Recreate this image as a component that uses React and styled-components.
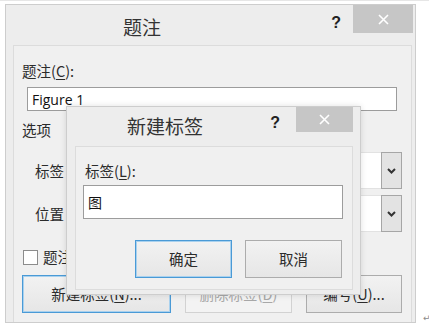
import React from "react";
import styled, { createGlobalStyle } from "styled-components";

const GlobalStyle = createGlobalStyle`
  html, body {
    margin: 0;
    padding: 0;
    background: #ffffff;
  }
  body {
    font-family: "Noto Sans CJK SC", sans-serif;
    color: #2b2b2b;
  }
`;

const cjk = `"Noto Sans CJK SC", sans-serif`;

const Page = styled.div`
  display: flex;
  align-items: flex-start;
  width: 429px;
  height: 327px;
  padding: 3px 0 0 5px;
  box-sizing: border-box;
  border-top: 1px solid #e6e6e6;
`;

const Window = styled.div`
  position: relative;
  display: flex;
  flex-direction: column;
  width: ${(p) => p.$w}px;
  height: ${(p) => p.$h}px;
  box-sizing: border-box;
  background: #ededed;
  border: 1px solid #cdcdcd;
  overflow: hidden;
  flex-shrink: 0;
`;

const Overlay = styled(Window)`
  position: absolute;
  left: 60px;
  top: 101px;
  box-shadow: 0 0 6px rgba(0, 0, 0, 0.12);
  z-index: 2;
`;

const TitleBar = styled.div`
  display: flex;
  align-items: flex-start;
  height: ${(p) => p.$h}px;
  flex-shrink: 0;
`;

const Title = styled.div`
  flex: 1;
  font-family: ${cjk};
  font-size: 19px;
  color: #333;
  height: 24px;
  line-height: 24px;
  padding-top: ${(p) => p.$top}px;
  padding-left: ${(p) => p.$left || 0}px;
`;

const Help = styled.div`
  font-family: "Liberation Sans", Arial, sans-serif;
  font-weight: bold;
  font-size: 16px;
  line-height: 18px;
  color: #222;
  margin-top: ${(p) => p.$top}px;
  margin-right: ${(p) => p.$gap}px;
`;

const Close = styled.div`
  display: flex;
  align-items: center;
  justify-content: center;
  width: ${(p) => p.$w}px;
  height: ${(p) => p.$h}px;
  margin-right: ${(p) => p.$right}px;
  background: #c6c6c6;
`;

const Client = styled.div`
  flex: 1;
  display: flex;
  flex-direction: column;
  margin: ${(p) => p.$margin};
  background: #f0f0f0;
  border: 1px solid #dcdcdc;
  border-bottom: ${(p) => (p.$open ? "none" : "1px solid #dcdcdc")};
`;

const Label = styled.div`
  font-family: ${cjk};
  font-size: 14.5px;
  height: 20px;
  line-height: 20px;
  color: #2b2b2b;
  margin: ${(p) => p.$margin};
  white-space: nowrap;
`;

const Key = styled.span`
  text-decoration: underline;
  text-underline-offset: 2px;
`;

const TextInput = styled.div`
  display: flex;
  align-items: center;
  width: ${(p) => p.$w}px;
  height: ${(p) => p.$h}px;
  box-sizing: border-box;
  margin: ${(p) => p.$margin};
  padding-left: 4px;
  background: #fff;
  border: 1px solid #9c9c9c;
  font-family: ${(p) => (p.$latin ? `"Open Sans", sans-serif` : cjk)};
  font-size: 14px;
  color: #111;
`;

const OptionRow = styled.div`
  display: flex;
  align-items: center;
  margin: ${(p) => p.$margin};
`;

const Combo = styled.div`
  flex: 1;
  display: flex;
  height: 35px;
  margin-left: 34px;
  margin-right: 9px;
  background: #fff;
  border-top: 1px solid #e2e2e2;
  border-bottom: 1px solid #e2e2e2;
`;

const ComboText = styled.div`
  flex: 1;
`;

const DropButton = styled.div`
  display: flex;
  align-items: center;
  justify-content: center;
  width: 21px;
  margin: -1px 0;
  box-sizing: border-box;
  background: #e3e3e3;
  border: 1px solid #a6a6a6;
`;

const CheckRow = styled.div`
  display: flex;
  align-items: center;
  gap: 5px;
  margin: 15px 0 0 9px;
`;

const Box = styled.div`
  width: 15px;
  height: 15px;
  box-sizing: border-box;
  background: #fff;
  border: 1px solid #8c8c8c;
`;

const ButtonRow = styled.div`
  display: flex;
  gap: ${(p) => p.$gap}px;
  justify-content: ${(p) => (p.$end ? "flex-end" : "flex-start")};
  margin: ${(p) => p.$margin};
`;

const Button = styled.div`
  display: flex;
  align-items: center;
  justify-content: center;
  width: ${(p) => p.$w}px;
  height: 38px;
  box-sizing: border-box;
  font-family: ${cjk};
  font-size: 14.5px;
  line-height: 20px;
  color: ${(p) => (p.$disabled ? "#a8a8a8" : "#2b2b2b")};
  background: ${(p) =>
    p.$disabled ? "#f3f3f3" : "linear-gradient(#f2f2f2, #e6e6e6)"};
  border: 1px solid
    ${(p) => (p.$default ? "#4a9ad6" : p.$disabled ? "#d2d2d2" : "#acacac")};
  box-shadow: ${(p) => (p.$default ? "inset 0 0 0 1px #a9d1ee" : "none")};
  white-space: nowrap;
`;

const Mark = styled.div`
  align-self: flex-end;
  font-family: "DejaVu Sans", sans-serif;
  font-size: 9px;
  color: #8a8a8a;
  margin: 0 0 4px 7px;
`;

const CloseX = () => (
  <svg width="11" height="11" viewBox="0 0 11 11">
    <path d="M1 1L10 10M10 1L1 10" stroke="#fff" strokeWidth="1.6" />
  </svg>
);

const Chevron = () => (
  <svg width="9" height="6" viewBox="0 0 9 6">
    <path d="M1 1L4.5 4.5L8 1" stroke="#333" strokeWidth="2" fill="none" />
  </svg>
);

function NewLabelDialog() {
  return (
    <Overlay $w={295} $h={189}>
      <TitleBar $h={39}>
        <Title $top={7} $left={60}>
          新建标签
        </Title>
        <Help $top={7} $gap={16}>
          ?
        </Help>
        <Close $w={57} $h={25} $right={7}>
          <CloseX />
        </Close>
      </TitleBar>
      <Client $margin="0 7px 4px 8px">
        <Label $margin="14px 0 0 9px">
          标签(<Key>L</Key>):
        </Label>
        <TextInput $w={260} $h={34} $margin="4px 0 0 7px">
          图
        </TextInput>
        <ButtonRow $gap={13} $end $margin="21px 10px 0 0">
          <Button $w={97} $default>
            确定
          </Button>
          <Button $w={97}>取消</Button>
        </ButtonRow>
      </Client>
    </Overlay>
  );
}

export default function App() {
  return (
    <>
      <GlobalStyle />
      <Page>
        <Window $w={411} $h={319}>
          <TitleBar $h={40}>
            <Title $top={10} $left={117}>
              题注
            </Title>
            <Help $top={9} $gap={12}>
              ?
            </Help>
            <Close $w={60} $h={28} $right={2}>
              <CloseX />
            </Close>
          </TitleBar>
          <Client $margin="0 3px 0 7px" $open>
            <Label $margin="15px 0 0 8px">
              题注(<Key>C</Key>):
            </Label>
            <TextInput $latin $w={370} $h={24} $margin="6px 0 0 13px">
              Figure 1
            </TextInput>
            <Label $margin="9px 0 0 8px">选项</Label>
            <OptionRow $margin="12px 0 0 21px">
              <Label>标签</Label>
              <Combo>
                <ComboText />
                <DropButton>
                  <Chevron />
                </DropButton>
              </Combo>
            </OptionRow>
            <OptionRow $margin="6px 0 0 21px">
              <Label>位置</Label>
              <Combo>
                <ComboText />
                <DropButton>
                  <Chevron />
                </DropButton>
              </Combo>
            </OptionRow>
            <CheckRow>
              <Box />
              <Label>
                题注中不包含标签(<Key>E</Key>)
              </Label>
            </CheckRow>
            <ButtonRow $gap={14} $margin="8px 0 0 8px">
              <Button $w={149} $default>
                新建标签(<Key>N</Key>)...
              </Button>
              <Button $w={107} $disabled>
                删除标签(<Key>D</Key>)
              </Button>
              <Button $w={96}>
                编号(<Key>U</Key>)...
              </Button>
            </ButtonRow>
          </Client>
          <NewLabelDialog />
        </Window>
        <Mark>↵</Mark>
      </Page>
    </>
  );
}
